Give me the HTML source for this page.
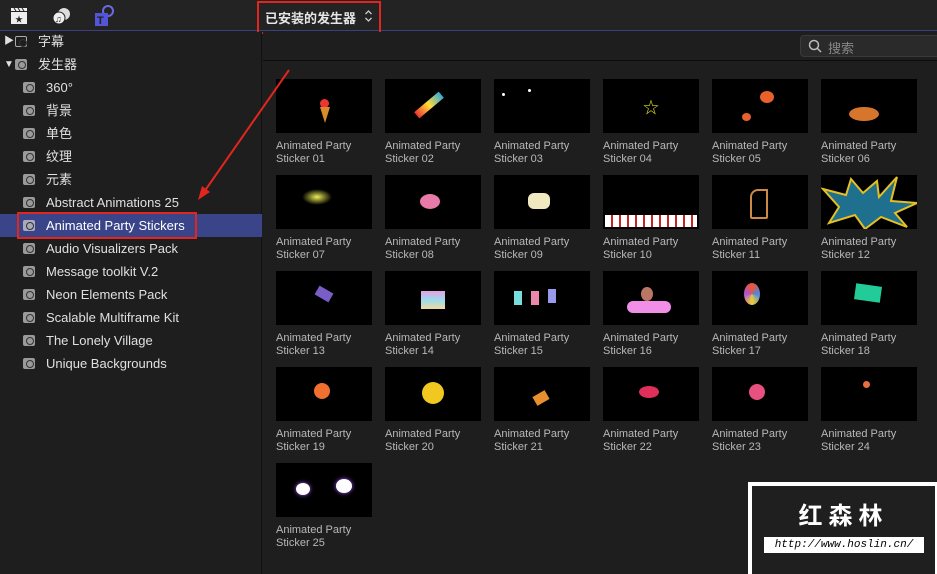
<!DOCTYPE html>
<html><head><meta charset="utf-8"><style>
*{margin:0;padding:0;box-sizing:border-box}
body{width:937px;height:574px;background:#1e1e1e;font-family:"Liberation Sans","Noto Sans CJK SC",sans-serif;overflow:hidden;position:relative;color:#ddd}
.top{position:absolute;left:0;top:0;width:937px;height:31px;background:#232323;border-bottom:1px solid #3b3f80}
.side{position:absolute;left:0;top:32px;width:262px;height:542px;background:#1e1e1e;border-right:1px solid #111}
.row{position:absolute;left:0;width:262px;height:23px;font-size:13px;line-height:23px;color:#e0e0e0}
.ic{position:absolute;top:6px;width:12px;height:11px;background:#9a9a9a;border-radius:2px}
.ic:after{content:"";position:absolute;left:3px;top:2px;width:6px;height:6px;border-radius:50%;border:1px solid #333}
.bar2{position:absolute;left:263px;top:32px;width:674px;height:29px;background:#1e1e1e;border-bottom:1px solid #0c0c0c}
.grid{position:absolute;left:263px;top:62px;width:674px;height:512px;background:#1e1e1e}
.cell{position:absolute;width:96px}
.th{width:96px;height:54px;background:#000;position:relative;overflow:hidden}
.lb{font-size:11px;line-height:13px;color:#b8b8b8;margin-top:7px}
.d{position:absolute;border-radius:50%}
</style></head><body>
<div class="top">
 <svg style="position:absolute;left:10px;top:7px" width="18" height="18"><rect x="1" y="5" width="16" height="12" fill="#eee"/><path d="M1 1 L17 1 L17 4 L1 4Z" fill="#eee"/><path d="M4 1l2 3M8 1l2 3M12 1l2 3" stroke="#222"/><text x="5" y="15" font-size="8" fill="#222">★</text></svg>
 <svg style="position:absolute;left:52px;top:6px" width="20" height="20"><circle cx="12" cy="8" r="6" fill="#ddd"/><circle cx="7" cy="12" r="6" fill="#eee" stroke="#222"/><text x="3" y="16" font-size="9" fill="#222">♫</text></svg>
 <svg style="position:absolute;left:94px;top:5px" width="20" height="22"><circle cx="14" cy="6" r="5" fill="none" stroke="#6a6ae0" stroke-width="2"/><rect x="1" y="8" width="13" height="13" fill="#5454d6"/><text x="3" y="19" font-size="11" font-weight="bold" fill="#222">T</text></svg>
 <div style="position:absolute;left:257px;top:1px;width:124px;height:33px;border:2px solid #e0261e"></div>
 <div style="position:absolute;left:265px;top:8px;font-size:13px;color:#e6e6e6;font-weight:bold">已安装的发生器</div>
 <svg style="position:absolute;left:364px;top:9px" width="9" height="14"><path d="M1.5 5 L4.5 2 L7.5 5 M1.5 9 L4.5 12 L7.5 9" stroke="#ccc" stroke-width="1.3" fill="none"/></svg>
</div>
<div class="side">
 <div class="row" style="top:-2px"><span style="position:absolute;left:4px;font-size:10px">▶</span><div class="ic" style="left:15px;background:none;border:1px solid #aaa"></div><span style="position:absolute;left:38px">字幕</span></div>
 <div class="row" style="top:21px"><span style="position:absolute;left:4px;font-size:10px">▼</span><div class="ic" style="left:15px"></div><span style="position:absolute;left:38px">发生器</span></div>
 <div class="row" style="top:44px"><div class="ic" style="left:23px"></div><span style="position:absolute;left:46px">360°</span></div>
 <div class="row" style="top:67px"><div class="ic" style="left:23px"></div><span style="position:absolute;left:46px">背景</span></div>
 <div class="row" style="top:90px"><div class="ic" style="left:23px"></div><span style="position:absolute;left:46px">单色</span></div>
 <div class="row" style="top:113px"><div class="ic" style="left:23px"></div><span style="position:absolute;left:46px">纹理</span></div>
 <div class="row" style="top:136px"><div class="ic" style="left:23px"></div><span style="position:absolute;left:46px">元素</span></div>
 <div class="row" style="top:159px"><div class="ic" style="left:23px"></div><span style="position:absolute;left:46px">Abstract Animations 25</span></div>
 <div class="row" style="top:182px;background:#3a4488"><div class="ic" style="left:23px;background:#aab"></div><span style="position:absolute;left:46px;color:#fff">Animated Party Stickers</span></div>
 <div style="position:absolute;left:17px;top:180px;width:180px;height:27px;border:2px solid #e0261e"></div>
 <div class="row" style="top:205px"><div class="ic" style="left:23px"></div><span style="position:absolute;left:46px">Audio Visualizers Pack</span></div>
 <div class="row" style="top:228px"><div class="ic" style="left:23px"></div><span style="position:absolute;left:46px">Message toolkit V.2</span></div>
 <div class="row" style="top:251px"><div class="ic" style="left:23px"></div><span style="position:absolute;left:46px">Neon Elements Pack</span></div>
 <div class="row" style="top:274px"><div class="ic" style="left:23px"></div><span style="position:absolute;left:46px">Scalable Multiframe Kit</span></div>
 <div class="row" style="top:297px"><div class="ic" style="left:23px"></div><span style="position:absolute;left:46px">The Lonely Village</span></div>
 <div class="row" style="top:320px"><div class="ic" style="left:23px"></div><span style="position:absolute;left:46px">Unique Backgrounds</span></div>
</div>
<div class="bar2">
 <div style="position:absolute;left:537px;top:3px;width:140px;height:22px;background:#2a2a2a;border:1px solid #3a3a3a;border-radius:4px"></div>
 <svg style="position:absolute;left:545px;top:7px" width="14" height="14"><circle cx="6" cy="6" r="4.5" fill="none" stroke="#bbb" stroke-width="1.5"/><path d="M9 9l4 4" stroke="#bbb" stroke-width="1.5"/></svg>
 <div style="position:absolute;left:565px;top:6px;font-size:13px;color:#888">搜索</div>
</div>
<div class="grid">
<div class="cell" style="left:13px;top:17px"><div class="th"><div class="d" style="left:44px;top:20px;width:9px;height:9px;background:#e33"></div><div style="position:absolute;left:44px;top:28px;border-left:5px solid transparent;border-right:5px solid transparent;border-top:16px solid #d98a2a"></div></div><div class="lb">Animated Party<br>Sticker 01</div></div>
<div class="cell" style="left:122px;top:17px"><div class="th"><div style="position:absolute;left:28px;top:22px;width:32px;height:8px;background:linear-gradient(90deg,#e33,#fd3,#3ad);transform:rotate(-40deg)"></div></div><div class="lb">Animated Party<br>Sticker 02</div></div>
<div class="cell" style="left:231px;top:17px"><div class="th"><div class="d" style="left:8px;top:14px;width:3px;height:3px;background:#fff"></div><div class="d" style="left:34px;top:10px;width:3px;height:3px;background:#fff"></div></div><div class="lb">Animated Party<br>Sticker 03</div></div>
<div class="cell" style="left:340px;top:17px"><div class="th"><div style="position:absolute;left:40px;top:15px;color:#dd2;font-size:16px">☆</div></div><div class="lb">Animated Party<br>Sticker 04</div></div>
<div class="cell" style="left:449px;top:17px"><div class="th"><div class="d" style="left:48px;top:12px;width:14px;height:12px;background:#e8602a"></div><div class="d" style="left:30px;top:34px;width:9px;height:8px;background:#e8602a"></div></div><div class="lb">Animated Party<br>Sticker 05</div></div>
<div class="cell" style="left:558px;top:17px"><div class="th"><div class="d" style="left:28px;top:28px;width:30px;height:14px;background:#d7752c"></div></div><div class="lb">Animated Party<br>Sticker 06</div></div>

<div class="cell" style="left:13px;top:113px"><div class="th"><div class="d" style="left:26px;top:14px;width:30px;height:16px;background:radial-gradient(#ee5,transparent 70%)"></div></div><div class="lb">Animated Party<br>Sticker 07</div></div>
<div class="cell" style="left:122px;top:113px"><div class="th"><div class="d" style="left:35px;top:19px;width:20px;height:15px;background:#e77aa8"></div></div><div class="lb">Animated Party<br>Sticker 08</div></div>
<div class="cell" style="left:231px;top:113px"><div class="th"><div style="position:absolute;left:34px;top:18px;width:22px;height:16px;background:#f0e8c0;border-radius:6px"></div></div><div class="lb">Animated Party<br>Sticker 09</div></div>
<div class="cell" style="left:340px;top:113px"><div class="th"><div style="position:absolute;left:2px;top:40px;width:92px;height:12px;background:repeating-linear-gradient(90deg,#fff 0 6px,#c22 6px 8px)"></div></div><div class="lb">Animated Party<br>Sticker 10</div></div>
<div class="cell" style="left:449px;top:113px"><div class="th"><div style="position:absolute;left:38px;top:14px;width:18px;height:30px;border:2px solid #c84;border-radius:8px 0 2px 2px"></div></div><div class="lb">Animated Party<br>Sticker 11</div></div>
<div class="cell" style="left:558px;top:113px"><div class="th"><svg width="96" height="54"><polygon points="2,14 25,20 30,4 42,18 56,6 58,22 76,2 70,26 96,28 74,38 86,52 60,42 44,54 34,40 8,48 18,32" fill="#1f6f8f" stroke="#e6c020" stroke-width="2"/></svg></div><div class="lb">Animated Party<br>Sticker 12</div></div>

<div class="cell" style="left:13px;top:209px"><div class="th"><div style="position:absolute;left:40px;top:18px;width:16px;height:10px;background:#7a5ec8;transform:rotate(30deg)"></div></div><div class="lb">Animated Party<br>Sticker 13</div></div>
<div class="cell" style="left:122px;top:209px"><div class="th"><div style="position:absolute;left:36px;top:20px;width:24px;height:18px;background:linear-gradient(#e8a0e0,#9de 50%,#f4d8a0)"></div></div><div class="lb">Animated Party<br>Sticker 14</div></div>
<div class="cell" style="left:231px;top:209px"><div class="th"><div style="position:absolute;left:20px;top:20px;width:8px;height:14px;background:#7dd"></div><div style="position:absolute;left:37px;top:20px;width:8px;height:14px;background:#e8a"></div><div style="position:absolute;left:54px;top:18px;width:8px;height:14px;background:#99e"></div></div><div class="lb">Animated Party<br>Sticker 15</div></div>
<div class="cell" style="left:340px;top:209px"><div class="th"><div style="position:absolute;left:24px;top:30px;width:44px;height:12px;background:#f08ee8;border-radius:6px"></div><div class="d" style="left:38px;top:16px;width:12px;height:14px;background:#b76"></div></div><div class="lb">Animated Party<br>Sticker 16</div></div>
<div class="cell" style="left:449px;top:209px"><div class="th"><div class="d" style="left:32px;top:12px;width:16px;height:22px;background:conic-gradient(#e53,#48e,#ec3,#a5d,#e53)"></div></div><div class="lb">Animated Party<br>Sticker 17</div></div>
<div class="cell" style="left:558px;top:209px"><div class="th"><div style="position:absolute;left:34px;top:14px;width:26px;height:16px;background:#2c9;transform:rotate(8deg)"></div></div><div class="lb">Animated Party<br>Sticker 18</div></div>

<div class="cell" style="left:13px;top:305px"><div class="th"><div class="d" style="left:38px;top:16px;width:16px;height:16px;background:#f07030"></div></div><div class="lb">Animated Party<br>Sticker 19</div></div>
<div class="cell" style="left:122px;top:305px"><div class="th"><div class="d" style="left:37px;top:15px;width:22px;height:22px;background:#f0c820"></div></div><div class="lb">Animated Party<br>Sticker 20</div></div>
<div class="cell" style="left:231px;top:305px"><div class="th"><div style="position:absolute;left:40px;top:26px;width:14px;height:10px;background:#e89030;transform:rotate(-30deg)"></div></div><div class="lb">Animated Party<br>Sticker 21</div></div>
<div class="cell" style="left:340px;top:305px"><div class="th"><div class="d" style="left:36px;top:19px;width:20px;height:12px;background:#e0305a"></div></div><div class="lb">Animated Party<br>Sticker 22</div></div>
<div class="cell" style="left:449px;top:305px"><div class="th"><div class="d" style="left:37px;top:17px;width:16px;height:16px;background:#e85080"></div></div><div class="lb">Animated Party<br>Sticker 23</div></div>
<div class="cell" style="left:558px;top:305px"><div class="th"><div class="d" style="left:42px;top:14px;width:7px;height:7px;background:#e87040"></div></div><div class="lb">Animated Party<br>Sticker 24</div></div>

<div class="cell" style="left:13px;top:401px"><div class="th"><div class="d" style="left:20px;top:20px;width:14px;height:12px;background:#fff;box-shadow:0 0 4px #a5f"></div><div class="d" style="left:60px;top:16px;width:16px;height:14px;background:#fff;box-shadow:0 0 4px #a5f"></div></div><div class="lb">Animated Party<br>Sticker 25</div></div>
</div>
<svg style="position:absolute;left:0;top:0" width="937" height="574"><path d="M289 70 L204 192" stroke="#e0261e" stroke-width="2"/><path d="M198 200 L202 186 L210 192Z" fill="#e0261e"/></svg>
<div style="position:absolute;left:748px;top:482px;width:189px;height:92px;background:#fff"></div>
<div style="position:absolute;left:752px;top:486px;width:183px;height:88px;background:#1f1f1f"></div>
<div style="position:absolute;left:752px;top:496px;width:183px;text-align:center;font-size:24px;color:#fff;font-weight:bold;letter-spacing:6px;font-family:'Noto Sans CJK SC',sans-serif">红森林</div>
<div style="position:absolute;left:764px;top:537px;width:160px;height:16px;background:#fff;color:#000;font-size:11px;font-style:italic;font-family:'Liberation Mono',monospace;line-height:16px;text-align:center">http://www.hoslin.cn/</div>
</body></html>
